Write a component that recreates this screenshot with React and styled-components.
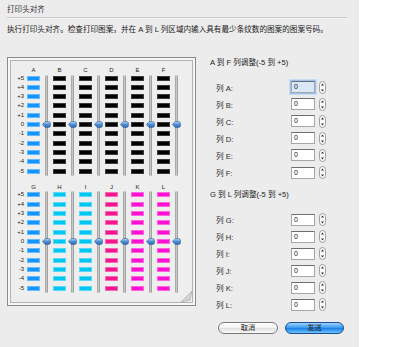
import React from "react"
import styled, { createGlobalStyle } from "styled-components"

const GlobalStyle = createGlobalStyle`
  html, body {
    margin: 0;
    padding: 0;
    background: #ffffff;
  }
  body {
    font-family: "Liberation Sans", "Noto Sans CJK SC", sans-serif;
    color: #1e1e1e;
  }
`

const Dialog = styled.div`
  width: 359px;
  height: 347px;
  box-sizing: border-box;
  background: #ececec;
  padding: 5px 12px 0 7px;
  display: flex;
  flex-direction: column;
`

const Title = styled.div`
  font-size: 7.6px;
  line-height: 10px;
  height: 10px;
  color: #333;
`

const Separator = styled.div`
  margin-top: 2px;
  height: 2px;
  background: #c9c9c9;
  border-bottom: 1px solid #f6f6f6;
  box-sizing: border-box;
`

const Instruction = styled.div`
  margin-top: 6px;
  font-size: 7.6px;
  line-height: 10px;
  height: 10px;
  white-space: nowrap;
  color: #1a1a1a;
`

const Body = styled.div`
  margin-top: 22px;
  display: flex;
  align-items: flex-start;
`

const Panel = styled.div`
  position: relative;
  width: 189px;
  height: 249px;
  box-sizing: border-box;
  border: 1px solid #8a8a8a;
  box-shadow: inset 0 0 0 2px #f7f7f7, inset 0 0 0 3px #b2b2b2;
  padding: 9px 0 0 3px;
  background: #eeeeee;
`

const Group = styled.div`
  display: flex;
  margin-top: ${(p) => (p.$first ? "0" : "10.2px")};
`

const RowLabels = styled.div`
  width: 13px;
  margin-top: 8.5px;
  margin-right: 3px;
  display: flex;
  flex-direction: column;
  gap: 4.33px;
`

const RowLabel = styled.div`
  height: 5px;
  line-height: 5px;
  font-size: 6px;
  text-align: right;
  color: #222;
`

const Column = styled.div`
  width: 26px;
  display: flex;
  flex-direction: column;
`

const ColHeader = styled.div`
  width: 13px;
  height: 7px;
  line-height: 7px;
  margin-bottom: 1.5px;
  font-size: 6px;
  text-align: center;
  color: #222;
`

const BarsWrap = styled.div`
  display: flex;
`

const BarStack = styled.div`
  width: 13px;
  display: flex;
  flex-direction: column;
  gap: 4.33px;
`

const Bar = styled.div`
  height: 5px;
  box-sizing: border-box;
  background: ${(p) => p.$color};
  border: 0.5px solid ${(p) => (p.$color === "#000000" ? "#3a3a3a" : "rgba(255,255,255,0.35)")};
`

const SliderSlot = styled.div`
  position: relative;
  width: 13px;
`

const Track = styled.div`
  position: absolute;
  left: 4.5px;
  top: -1px;
  bottom: -2px;
  width: 3px;
  border-radius: 1.5px;
  background: linear-gradient(to right, #9a9a9a, #c8c8c8 50%, #8e8e8e);
`

const ThumbWrap = styled.div`
  position: absolute;
  left: 1.5px;
  top: 45.5px;
  width: 9px;
  height: 7px;
  line-height: 0;
`

const CurlWrap = styled.div`
  position: absolute;
  right: 3px;
  bottom: 3px;
  width: 11px;
  height: 11px;
  line-height: 0;
`

const Form = styled.div`
  padding: 1px 0 0 14px;
  display: flex;
  flex-direction: column;
`

const SectionHeader = styled.div`
  height: 10px;
  line-height: 10px;
  font-size: 7.6px;
  color: #1a1a1a;
  white-space: nowrap;
  margin-top: ${(p) => (p.$second ? "9.4px" : "0")};
`

const FieldList = styled.div`
  margin-top: 10.5px;
  display: flex;
  flex-direction: column;
`

const Field = styled.div`
  height: 17.1px;
  display: flex;
  align-items: center;
  padding-left: 6px;
`

const FieldLabel = styled.div`
  width: 75px;
  font-size: 7.6px;
  color: #2a2a2a;
`

const NumberBox = styled.div`
  width: 24px;
  height: 12px;
  box-sizing: border-box;
  background: #fff;
  border: 1px solid #a6a6a6;
  border-top-color: #6e6e6e;
  font-size: 7px;
  line-height: 9px;
  padding-left: 2px;
  color: #111;
  box-shadow: ${(p) => (p.$focus ? "0 0 0 1px #9ec3ef, 0 0 0 2px #c6dcf6" : "none")};
  background: ${(p) => (p.$focus ? "#dbe8fa" : "#fff")};
`

const StepperWrap = styled.div`
  margin-left: 4px;
  width: 7px;
  height: 13px;
  line-height: 0;
`

const ButtonRow = styled.div`
  margin-top: 8.5px;
  padding-left: 8px;
  display: flex;
  gap: 7px;
`

const PillButton = styled.div`
  width: ${(p) => p.$w}px;
  height: 12px;
  box-sizing: border-box;
  border-radius: 6px;
  font-size: 7.2px;
  line-height: 10px;
  text-align: center;
  color: #222;
  border: 1px solid ${(p) => (p.$primary ? "#1d4e8f" : "#7a7a7a")};
  background: ${(p) =>
    p.$primary
      ? "linear-gradient(to bottom, #9fd3ff 0%, #3c9cf0 45%, #1e82e6 55%, #6cc4ff 100%)"
      : "linear-gradient(to bottom, #ffffff 0%, #f2f2f2 50%, #e2e2e2 55%, #fafafa 100%)"};
`

const rows = ["+5", "+4", "+3", "+2", "+1", "0", "-1", "-2", "-3", "-4", "-5"]

const BLUE = "#1394ff"
const CYAN = "#00c6f2"
const PINK = "#f5168e"
const MAGENTA = "#ff10d2"
const BLACK = "#000000"

const groups = [
  [
    { l: "A", c: BLUE },
    { l: "B", c: BLACK },
    { l: "C", c: BLACK },
    { l: "D", c: BLACK },
    { l: "E", c: BLACK },
    { l: "F", c: BLACK },
  ],
  [
    { l: "G", c: BLUE },
    { l: "H", c: CYAN },
    { l: "I", c: CYAN },
    { l: "J", c: PINK },
    { l: "K", c: MAGENTA },
    { l: "L", c: MAGENTA },
  ],
]

function Thumb() {
  return (
    <ThumbWrap>
      <svg width="9" height="7" viewBox="0 0 9 7">
        <defs>
          <linearGradient id="thumbFill" x1="0" y1="0" x2="0" y2="1">
            <stop offset="0" stopColor="#b9d8f7" />
            <stop offset="0.5" stopColor="#4f8fd6" />
            <stop offset="1" stopColor="#2a68b8" />
          </linearGradient>
        </defs>
        <path d="M0.4 3.5 L3.2 0.5 H6.6 Q8.6 0.5 8.6 3.5 Q8.6 6.5 6.6 6.5 H3.2 Z" fill="url(#thumbFill)" stroke="#3b5f8e" strokeWidth="0.6" />
      </svg>
    </ThumbWrap>
  )
}

function PageCurl() {
  return (
    <CurlWrap>
      <svg width="11" height="11" viewBox="0 0 11 11">
        <path d="M11 0 L11 11 L0 11 Z" fill="#eeeeee" />
        <path d="M11 0 L0 11 L9 9 Z" fill="#d4d4d4" stroke="#a0a0a0" strokeWidth="0.6" />
      </svg>
    </CurlWrap>
  )
}

function Stepper() {
  return (
    <StepperWrap>
      <svg width="7" height="13" viewBox="0 0 7 13">
        <rect x="0.5" y="0.5" width="6" height="12" rx="3" fill="#fafafa" stroke="#8a8a8a" strokeWidth="0.8" />
        <path d="M3.5 2.6 L5 4.6 H2 Z" fill="#333" />
        <path d="M3.5 10.4 L5 8.4 H2 Z" fill="#333" />
      </svg>
    </StepperWrap>
  )
}

function PatternGroup({ cols, first }) {
  return (
    <Group $first={first}>
      <RowLabels>
        {rows.map((r) => (
          <RowLabel key={r}>{r}</RowLabel>
        ))}
      </RowLabels>
      {cols.map((col) => (
        <Column key={col.l}>
          <ColHeader>{col.l}</ColHeader>
          <BarsWrap>
            <BarStack>
              {rows.map((r) => (
                <Bar key={r} $color={col.c} />
              ))}
            </BarStack>
            <SliderSlot>
              <Track />
              <Thumb />
            </SliderSlot>
          </BarsWrap>
        </Column>
      ))}
    </Group>
  )
}

function Fields({ letters }) {
  return (
    <FieldList>
      {letters.map((l) => (
        <Field key={l}>
          <FieldLabel>列 {l}:</FieldLabel>
          <NumberBox $focus={l === "A"}>0</NumberBox>
          <Stepper />
        </Field>
      ))}
    </FieldList>
  )
}

export default function App() {
  return (
    <>
      <GlobalStyle />
      <Dialog>
        <Title>打印头对齐</Title>
        <Separator />
        <Instruction>执行打印头对齐。检查打印图案，并在 A 到 L 列区域内输入具有最少条纹数的图案的图案号码。</Instruction>
        <Body>
          <Panel>
            <PatternGroup cols={groups[0]} first />
            <PatternGroup cols={groups[1]} />
            <PageCurl />
          </Panel>
          <Form>
            <SectionHeader>A 到 F 列调整(-5 到 +5)</SectionHeader>
            <Fields letters={["A", "B", "C", "D", "E", "F"]} />
            <SectionHeader $second>G 到 L 列调整(-5 到 +5)</SectionHeader>
            <Fields letters={["G", "H", "I", "J", "K", "L"]} />
            <ButtonRow>
              <PillButton $w={60}>取消</PillButton>
              <PillButton $w={59} $primary>发送</PillButton>
            </ButtonRow>
          </Form>
        </Body>
      </Dialog>
    </>
  )
}
